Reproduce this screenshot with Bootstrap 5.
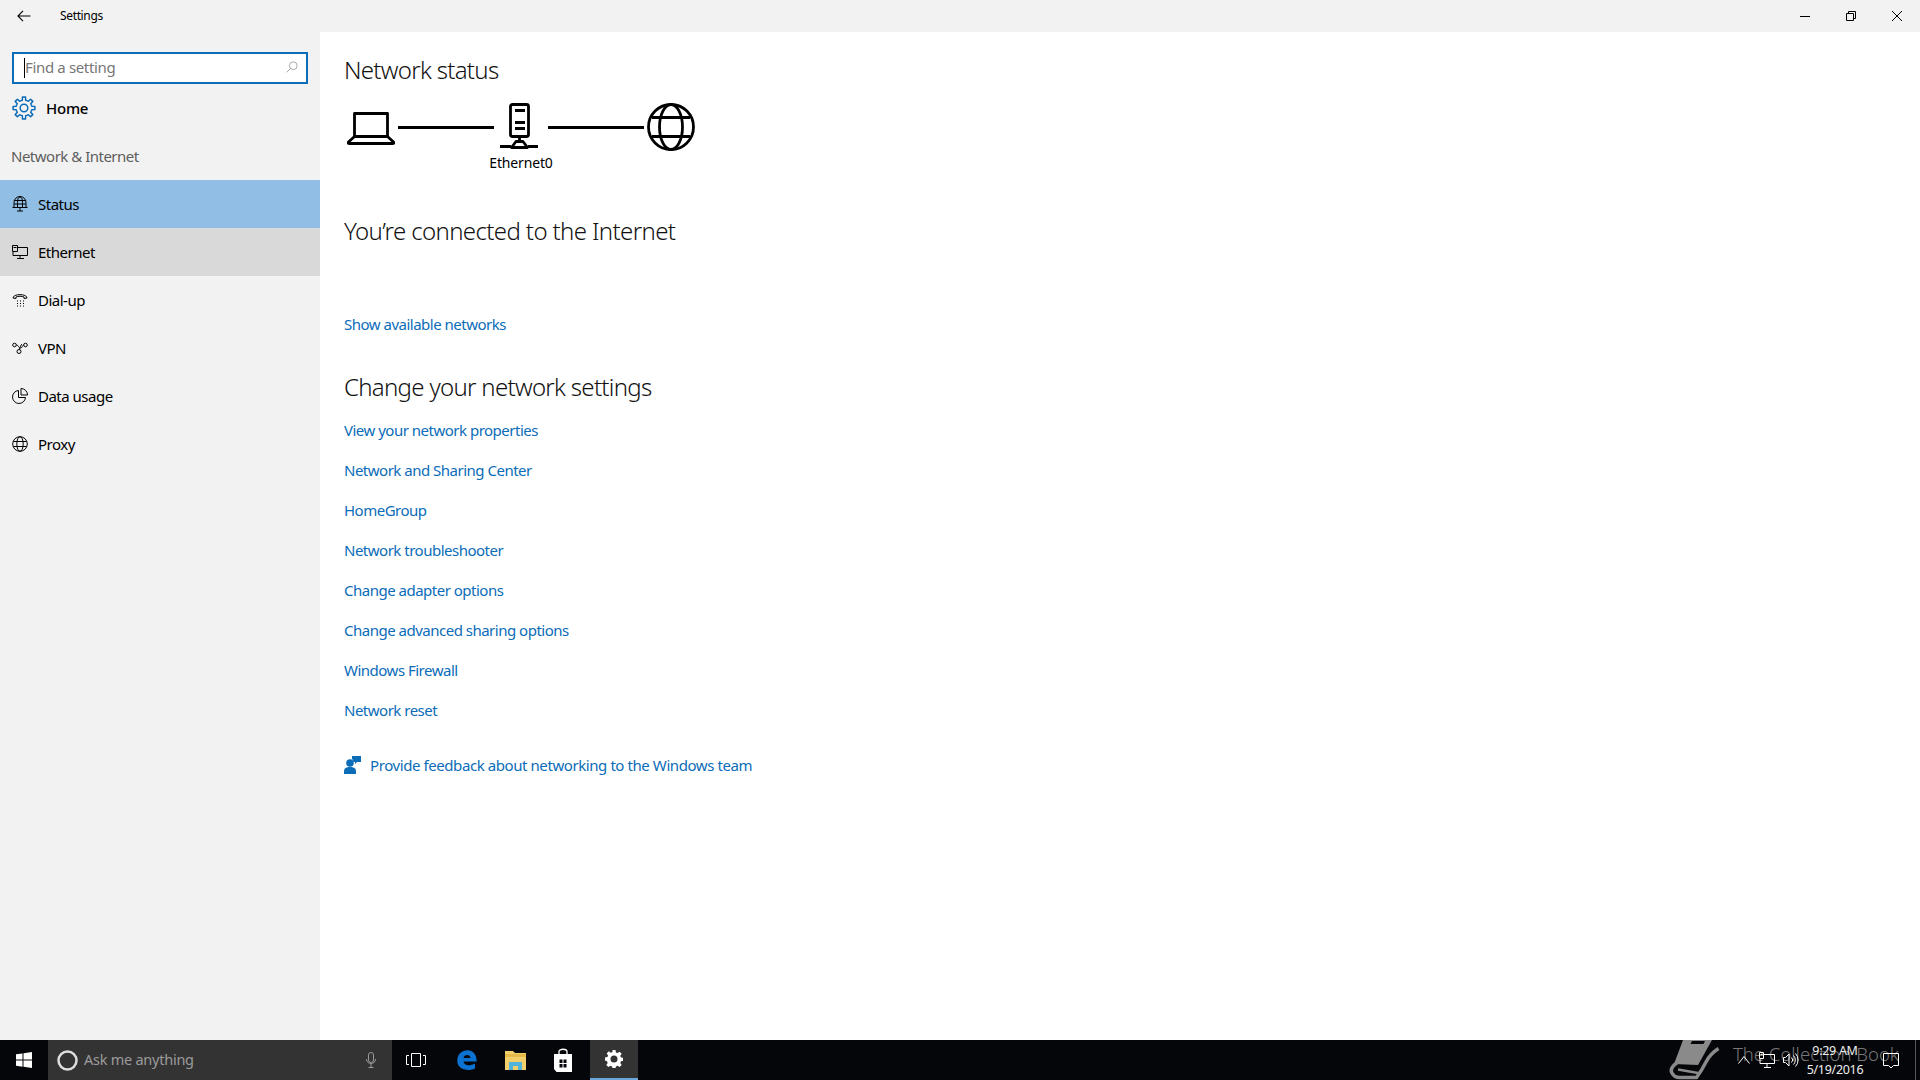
<!DOCTYPE html>
<html lang="en"><head><meta charset="utf-8"><title>Settings</title>
<link href="https://cdn.jsdelivr.net/npm/bootstrap@5.3.0/dist/css/bootstrap.min.css" rel="stylesheet">
<style>
html,body{height:100%;overflow:hidden}
body{font-family:"Noto Sans","Open Sans","Liberation Sans",sans-serif;font-size:15px;color:#000;background:#fff;letter-spacing:-.5px}
svg{display:block;flex:none}
.shell{height:1080px;width:1920px}
.titlebar{height:32px;background:#f2f2f2;font-size:12px;letter-spacing:-.35px}
.backbtn{width:48px}
.winbtn{width:46px}
.appname{margin-left:12px}
.mainarea{height:1008px}
.side{width:320px;background:#f2f2f2;padding-top:20px}
.searchbox{margin:0 12px;height:32px;border:2px solid #0b6cb8;background:#fff;color:#777;padding:0 8px 2px 10px;font-size:15px;letter-spacing:-.35px}
.caret-bar{width:1px;height:20px;background:#000;margin-top:2px}
.homerow{height:48px;padding-left:12px;gap:10px;font-weight:500;letter-spacing:-.25px}
.group-label{color:#5d5d5d;padding-left:11px;height:48px;line-height:48px}
.sideitem{height:48px;padding-left:12px;gap:10px;color:#000}
.sideitem.current{background:#90bee5}
.sideitem.hovered{background:#d9d9d9}
.content{padding:0 24px;flex:1}
.h-title{font-size:24px;font-weight:300;letter-spacing:-.7px;line-height:32px;margin:21.5px 0 0;color:#111}
.diagram{height:48px;margin-top:17.5px;margin-left:3px;gap:3px}
.wire{height:3px;background:#000;width:96px}
.netcap{font-size:14px;letter-spacing:-.15px;width:100px;text-align:center;margin-left:127px;line-height:16px;margin-top:4px}
.h-conn{font-size:24px;font-weight:300;letter-spacing:-.62px;line-height:32px;margin:44px 0 0;color:#111}
.lnk{color:#0b6cb8;text-decoration:none;display:block;height:40px;line-height:40px}
.firstlnk{margin-top:57px}
.h-change{font-size:24px;font-weight:300;letter-spacing:-.7px;line-height:32px;margin:27px 0 7px;color:#111}
.feedback{margin-top:15px;height:40px;gap:9px}
.feedback .lnk{letter-spacing:-.42px}
.taskbar{height:40px;background:#05060a;color:#fff;position:relative;letter-spacing:-.25px}
.tb-cell{width:48px;height:40px}
.tb-search{width:344px;background:#333;color:#9b9b9b;font-size:14.5px;padding:0 12px;gap:6px}
.tb-gap{width:3px}
.tb-active{background:#333;border-bottom:2px solid #6aa8dc}
.cortana{margin-left:-3px}
.wmark{position:absolute;left:1733px;top:1px;font-size:18.5px;font-weight:300;color:#777;letter-spacing:0;line-height:26px;white-space:nowrap}
.wbook{position:absolute;left:1668px;top:0}
.ticon{position:absolute;top:12px}
.ic-chev{left:1738px;top:15px}
.ic-net{left:1759px}
.ic-vol{left:1783px}
.ic-act{left:1883px;top:13px}
.clock{position:absolute;left:1795px;width:80px;text-align:center;top:0;font-size:12.5px;line-height:19px;padding-top:1px;letter-spacing:-.3px;color:#eee}
.edge-line{position:absolute;left:1915px;top:0;width:1px;height:40px;background:#555}
</style></head><body>
<div class="shell d-flex flex-column">
  <div class="titlebar d-flex align-items-center">
    <div class="backbtn d-flex justify-content-center"><svg width="14" height="12" viewBox="0 0 14 12" fill="none" stroke="#000" stroke-width="1.1"><path d="M13.5 6H1M6 .8 .9 6 6 11.2"/></svg></div>
    <div class="appname">Settings</div>
    <div class="ms-auto d-flex">
      <div class="winbtn d-flex justify-content-center"><svg width="10" height="10" viewBox="0 0 10 10"><path d="M0 5.500h10" stroke="#000"/></svg></div>
      <div class="winbtn d-flex justify-content-center"><svg width="10" height="10" viewBox="0 0 10 10" fill="none" stroke="#000"><path d="M.5 2.500h7v7h-7zM2.500 2.500v-2h7v7h-2"/></svg></div>
      <div class="winbtn d-flex justify-content-center"><svg width="10" height="10" viewBox="0 0 10 10" fill="none" stroke="#000"><path d="M0 0l10 10M10 0 0 10"/></svg></div>
    </div>
  </div>
  <div class="mainarea d-flex">
    <aside class="side">
      <div class="searchbox d-flex align-items-center"><span class="caret-bar"></span><span>Find a setting</span>
        <svg class="ms-auto" width="12" height="12" viewBox="0 0 14 14" fill="none" stroke="#999"><circle cx="8.500" cy="5.500" r="4.500"/><path d="M5.300 8.700.7 13.300"/></svg></div>
      <div class="homerow d-flex align-items-center">
        <svg width="24" height="24" viewBox="0 0 24 24" fill="none" stroke="#0b6cb8" stroke-width="1.500" stroke-linejoin="round">
          <defs><path id="gearseg" d="M-3.060-7.390-1.660-7.830-1.530-10.890 1.530-10.890 1.660-7.830 3.060-7.390"/></defs>
          <g transform="translate(12 12)">
            <use href="#gearseg"/><use href="#gearseg" transform="rotate(45)"/><use href="#gearseg" transform="rotate(90)"/><use href="#gearseg" transform="rotate(135)"/><use href="#gearseg" transform="rotate(180)"/><use href="#gearseg" transform="rotate(225)"/><use href="#gearseg" transform="rotate(270)"/><use href="#gearseg" transform="rotate(315)"/>
            <circle r="3.800"/>
          </g></svg>
        <span>Home</span>
      </div>
      <div class="group-label">Network &amp; Internet</div>
      <div class="sideitem current d-flex align-items-center">
        <svg width="16" height="16" viewBox="0 0 16 16" fill="none" stroke="#000"><path d="M2 11.500V6.500A6 6 0 1 1 14 6.500V11.500"/><path d="M5.500 11.500V6.500C5.500 3 6.500 1 8 1s2.500 2 2.500 5.500v5"/><path d="M2.500 4.500h11M2 8h12M.5 11.500h15M8 12v3M5 15h6"/></svg>
        <span>Status</span></div>
      <div class="sideitem hovered d-flex align-items-center">
        <svg width="16" height="14" viewBox="0 0 16 14" fill="none" stroke="#000"><path d="M5.500 2.500h10v8H1V7M8 10.500v3M5 13.500h7"/><path d="M.5.500h5v6h-5zM1.500 2.500h3"/></svg>
        <span>Ethernet</span></div>
      <div class="sideitem d-flex align-items-center">
        <svg width="16" height="14" viewBox="0 0 16 14" fill="none" stroke="#000"><path d="M1 5C1 .5 15 .5 15 5l-3 .5V4C10 3 6 3 4 4v1.500z"/><path d="M5 8h1M8 8h1M11 8h1M5 10.500h1M8 10.500h1M11 10.500h1M5 13h1M8 13h1M11 13h1" stroke-width="1.200"/></svg>
        <span>Dial-up</span></div>
      <div class="sideitem d-flex align-items-center">
        <svg width="16" height="12" viewBox="0 0 16 12" fill="none" stroke="#000"><circle cx="2.500" cy="3" r="1.800"/><circle cx="13.500" cy="3" r="1.800"/><circle cx="7" cy="9.500" r="2"/><path d="M4.500 3c2 0 2 3 4 3s2-3 3-3M7.500 7.500C8 5 9 3 10 2"/></svg>
        <span>VPN</span></div>
      <div class="sideitem d-flex align-items-center">
        <svg width="16" height="16" viewBox="0 0 16 16" fill="none" stroke="#000"><path d="M6.500 2.500A6.500 6.500 0 1 0 13.500 9.500H6.500z"/><path d="M9 .5a6.500 6.500 0 0 1 6.500 6.500H9z"/></svg>
        <span>Data usage</span></div>
      <div class="sideitem d-flex align-items-center">
        <svg width="16" height="16" viewBox="0 0 16 16" fill="none" stroke="#000"><circle cx="8" cy="8" r="7.300"/><ellipse cx="8" cy="8" rx="3.200" ry="7.300"/><path d="M1.500 5.500h13M1.500 10.500h13"/></svg>
        <span>Proxy</span></div>
    </aside>
    <main class="content">
      <h1 class="h-title">Network status</h1>
      <div class="diagram d-flex align-items-center">
        <svg width="48" height="48" viewBox="0 0 48 48" fill="none" stroke="#000" stroke-width="2.800" stroke-linejoin="round"><path d="M7.500 33.500V10.500h33v23"/><path d="M7.500 33.500h33l6 5.500q1 1.500-1 1.500H2.500q-2 0-1-1.500z"/></svg>
        <div class="wire"></div>
        <svg width="44" height="48" viewBox="0 0 44 48" fill="none" stroke="#000" stroke-width="2.800" stroke-linejoin="round"><rect x="13.500" y="1.500" width="18" height="32" rx="2"/><path d="M18 7.500h10M18 19.500h10M18 25.500h10M22.500 34v5"/><path d="M14.500 44.500 19 38.500h7l4.500 6z"/><path d="M3 43.500h11M31 43.500h10"/></svg>
        <div class="wire ms-1"></div>
        <svg width="48" height="48" viewBox="0 0 48 48" fill="none" stroke="#000" stroke-width="2.800"><circle cx="24" cy="24" r="22.500"/><ellipse cx="24" cy="24" rx="11.500" ry="22.500"/><path d="M5 14.500h38M5 33.500h38"/></svg>
      </div>
      <div class="netcap">Ethernet0</div>
      <h2 class="h-conn">You’re connected to the Internet</h2>
      <a class="lnk firstlnk" href="#">Show available networks</a>
      <h2 class="h-change">Change your network settings</h2>
      <a class="lnk" href="#">View your network properties</a>
      <a class="lnk" href="#">Network and Sharing Center</a>
      <a class="lnk" href="#">HomeGroup</a>
      <a class="lnk" href="#">Network troubleshooter</a>
      <a class="lnk" href="#">Change adapter options</a>
      <a class="lnk" href="#">Change advanced sharing options</a>
      <a class="lnk" href="#">Windows Firewall</a>
      <a class="lnk" href="#">Network reset</a>
      <div class="feedback d-flex align-items-center">
        <svg width="17" height="18" viewBox="0 0 17 18" fill="#0b6cb8"><circle cx="6" cy="7" r="3.800"/><path d="M0 18v-2.500C0 12 2.500 11 6 11s6 1 6 4.500V18z"/><path d="M8 0h9v6h-4l-2 2V6H9.500C9.300 4.500 8.800 3.500 8 3z"/></svg>
        <a href="#" class="lnk">Provide feedback about networking to the Windows team</a>
      </div>
    </main>
  </div>
  <div class="taskbar d-flex">
    <div class="tb-cell d-flex align-items-center justify-content-center"><svg width="16" height="16" viewBox="0 0 16 16" fill="#fff"><path d="M0 2.300 6.500 1.400v6.200H0zM7.500 1.200 16 0v7.600H7.500zM0 8.500h6.500v6.200L0 13.800zM7.500 8.500H16V16l-8.500-1.200z"/></svg></div>
    <div class="tb-search d-flex align-items-center">
      <svg class="cortana" width="21" height="21" viewBox="0 0 21 21" fill="none" stroke="#ddd" stroke-width="2.500"><circle cx="10.500" cy="10.500" r="9"/></svg>
      <span>Ask me anything</span>
      <svg class="ms-auto me-1" width="10" height="16" viewBox="0 0 10 16" fill="none" stroke="#999"><rect x="2.500" y=".5" width="5" height="10" rx="2.500"/><path d="M.5 7c0 6 9 6 9 0M5 12v3.500M2.500 15.500h5"/></svg>
    </div>
    <div class="tb-cell d-flex align-items-center justify-content-center"><svg width="20" height="14" viewBox="0 0 20 14" fill="none" stroke="#fff"><path d="M5.500.500h9v13h-9zM3 2.500H.5v9H3M17 2.500h2.500v9H17"/></svg></div>
    <div class="tb-gap"></div>
    <div class="tb-cell d-flex align-items-center justify-content-center"><svg width="20" height="20" viewBox="0 0 20 20"><path d="M.3 10.500C.5 4 5 .3 10.500.3 16 .3 19.700 4.500 19.700 11.500H6.500c.3 4 6 5 11.500 2v5c-6 3-18 2-17.700-8M6.500 8h7c0-4-6.500-4-7 0z" fill="#0b72d1" fill-rule="evenodd"/></svg></div>
    <div class="tb-cell d-flex align-items-center justify-content-center"><svg width="21" height="20" viewBox="0 0 21 20"><path d="M0 1h8l2 2h11v17H0z" fill="#f2cf6b"/><path d="M0 4h21v3H0z" fill="#e6b94a"/><path d="M4 12h13v8H13v-4H8v4H4z" fill="#4fb3dc"/></svg></div>
    <div class="tb-cell d-flex align-items-center justify-content-center"><svg width="20" height="24" viewBox="0 0 20 24"><path d="M6 7V3.500C6 .5 14 .5 14 3.500V7" fill="none" stroke="#fff" stroke-width="1.300"/><path d="M1 6h18v18H3.500L1 21z" fill="#fff"/><path d="M6.500 11.500h3V15h-3zM10.500 11.500h3V15h-3zM6.500 16h3v3.500h-3zM10.500 16h3v3.500h-3z" fill="#05060a"/></svg></div>
    <div class="tb-gap"></div>
    <div class="tb-cell tb-active d-flex align-items-center justify-content-center"><svg width="18" height="18" viewBox="0 0 18 18"><path d="M7.500 0h3l.4 2.400 1.700.7 2-1.400 2.100 2.100-1.400 2 .7 1.700 2.400.4v3l-2.400.4-.7 1.700 1.400 2-2.100 2.100-2-1.400-1.700.7-.4 2.400h-3l-.4-2.400-1.700-.7-2 1.400-2.100-2.100 1.400-2-.7-1.700L0 10.500v-3l2.400-.4.700-1.700-1.400-2 2.100-2.100 2 1.400 1.700-.7zM9 5.500a3.500 3.500 0 1 0 0 7 3.500 3.500 0 0 0 0-7z" fill="#fff" fill-rule="evenodd"/></svg></div>
    <svg class="wbook" width="52" height="40" viewBox="0 0 52 40">
      <path d="M15 0H44L30 25 6 24Z" fill="#8a8a8a"/>
      <path d="M24 1h13l-1.500 3H22.500z" fill="#05060a"/>
      <path d="M10 22Q1 28 4 33 6.500 38 13 37.500H28.500Q34 30 38 22 42 14 50.500 8.500" fill="none" stroke="#8a8a8a" stroke-width="3.500"/>
      <path d="M10 29.500 30 33" stroke="#8a8a8a" stroke-width="2.500"/>
    </svg>
    <div class="wmark">The Collection Book</div>
    <svg class="ticon ic-chev" width="12" height="10" viewBox="0 0 12 10" fill="none" stroke="#fff"><path d="M.5 8.500 6 1.500l5.500 7"/></svg>
    <svg class="ticon ic-net" width="16" height="16" viewBox="0 0 16 16" fill="none" stroke="#fff"><path d="M4 2.500h11.500v9H1V7M8 11.500v4M5 15.500h7"/><path d="M.5.500h4v6h-4zM1.500 2.500h2"/></svg>
    <svg class="ticon ic-vol" width="16" height="16" viewBox="0 0 16 16" fill="none" stroke="#fff"><path d="M.5 5.500h2l3.500-3.500v12L2.500 10.500h-2zM8.500 5.500a3.500 3.500 0 0 1 0 5M10.500 3.500a6.500 6.500 0 0 1 0 9M12.500 1.500a9.500 9.500 0 0 1 0 13"/></svg>
    <div class="clock">9:29 AM<br>5/19/2016</div>
    <svg class="ticon ic-act" width="16" height="16" viewBox="0 0 16 16" fill="none" stroke="#fff"><path d="M.5.500h15v12h-5l-2.500 2.500-2.500-2.500h-5z"/></svg>
    <div class="edge-line"></div>
  </div>
</div>
</body></html>
